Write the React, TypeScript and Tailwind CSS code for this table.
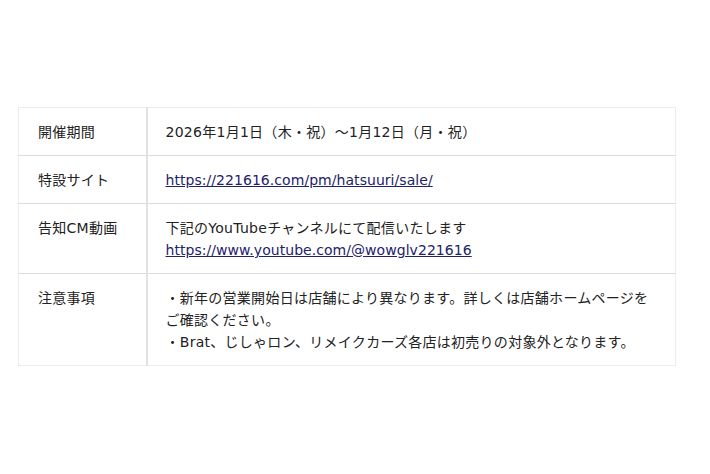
import React from 'react';

const LINK = 'underline text-[#22226a] tracking-[0.05px]';

const ROWS: { label: string; content: React.ReactNode }[] = [
  { label: '開催期間', content: '2026年1月1日（木・祝）～1月12日（月・祝）' },
  {
    label: '特設サイト',
    content: (
      <a href="#" className={LINK}>
        https://221616.com/pm/hatsuuri/sale/
      </a>
    ),
  },
  {
    label: '告知CM動画',
    content: (
      <>
        下記のYouTubeチャンネルにて配信いたします
        <br />
        <a href="#" className={LINK}>
          https://www.youtube.com/@wowglv221616
        </a>
      </>
    ),
  },
  {
    label: '注意事項',
    content: (
      <>
        ・新年の営業開始日は店舗により異なります。詳しくは店舗ホームページを
        <br />
        ご確認ください。
        <br />
        ・Brat、じしゃロン、リメイクカーズ各店は初売りの対象外となります。
      </>
    ),
  },
];

const App: React.FC = () => {
  return (
    <div
      className="w-[710px] h-[474px] bg-white pt-[107px] text-[#222] text-[14px] leading-[22px]"
      style={{ fontFamily: '"DejaVu Sans", "Noto Sans CJK JP", sans-serif' }}
    >
      <table className="ml-[18px] w-[658px] border-collapse border border-[#ececec]">
        <tbody>
          {ROWS.map((row) => (
            <tr key={row.label} className="border-t border-[#dcdcdc] first:border-t-0">
              <td className="w-[128px] align-top pt-[13px] pb-[12px] pl-[19px] border-r-2 border-[#e2e2e2] tracking-[0.27px]">
                {row.label}
              </td>
              <td className="align-top pt-[13px] pb-[12px] pl-[18px] pr-3 tracking-[0.27px]">
                {row.content}
              </td>
            </tr>
          ))}
        </tbody>
      </table>
    </div>
  );
};

export default App;
